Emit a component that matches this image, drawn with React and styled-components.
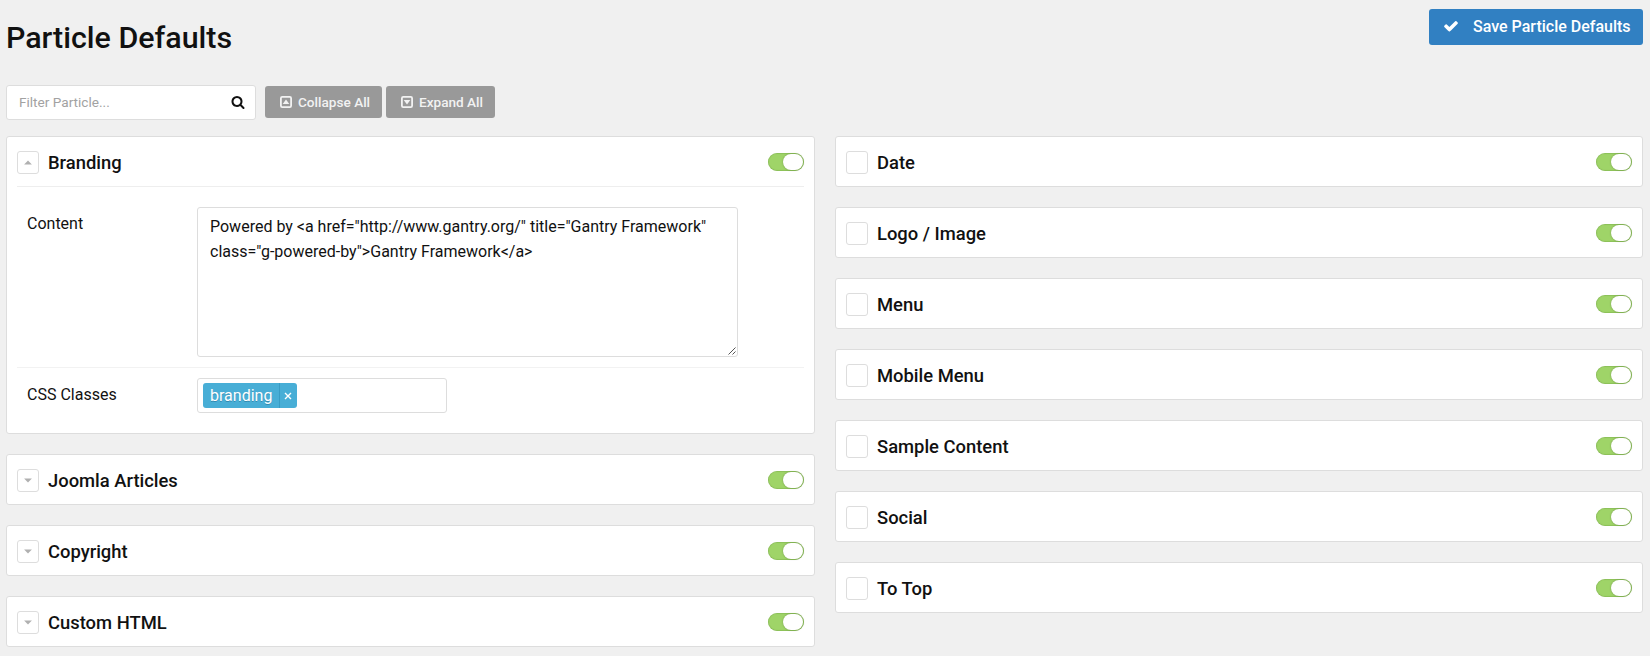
import React, { useState } from 'react';
import styled, { createGlobalStyle } from 'styled-components';

const GlobalStyle = createGlobalStyle`
  *, *::before, *::after { box-sizing: border-box; }
  body {
    margin: 0;
    background: #f0f0f0;
    color: #111;
    font-family: Roboto, "Liberation Sans", sans-serif;
    font-size: 16px;
    line-height: 24px;
    -webkit-font-smoothing: antialiased;
  }
  input, textarea, button { font-family: inherit; }
`;

const Page = styled.main`
  padding: 9px 7px 9px 6px;
  min-height: 656px;
`;

const Header = styled.header`
  display: flex;
  justify-content: space-between;
  align-items: flex-start;
  height: 76px;
`;

const Title = styled.h2`
  margin: 9px 0 0;
  font-size: 30.4px;
  font-weight: 500;
  line-height: 40px;
`;

const SaveButton = styled.button`
  display: flex;
  align-items: center;
  gap: 14px;
  width: 214px;
  height: 36px;
  padding: 0 0 2px 14px;
  border: 0;
  border-radius: 3px;
  background: #3180c2;
  color: #fff;
  font-size: 16px;
  font-weight: 500;
  white-space: nowrap;
`;

const Toolbar = styled.div`
  display: flex;
  align-items: flex-start;
  height: 35px;
  margin-bottom: 16px;
`;

const SearchBox = styled.label`
  display: flex;
  align-items: center;
  width: 250px;
  height: 35px;
  margin-right: 9px;
  padding: 0 10px 2px 12px;
  border: 1px solid #ddd;
  border-radius: 3px;
  background: #fff;

  input {
    flex: 1;
    min-width: 0;
    padding: 0;
    border: 0;
    outline: 0;
    background: none;
    font-size: 13.6px;
    &::placeholder { color: #a2a2a2; opacity: 1; }
  }
`;

const ToolButton = styled.button`
  display: flex;
  align-items: center;
  gap: 6px;
  width: ${(p) => p.$width}px;
  height: 32px;
  margin: 1px 4px 0 0;
  padding: 0 0 0 14px;
  border: 0;
  border-radius: 3px;
  background: #999;
  color: #f2f2f2;
  font-size: 13.6px;
  font-weight: 500;
  white-space: nowrap;
`;

const Columns = styled.div`
  display: grid;
  grid-template-columns: 809px 808px;
  column-gap: 20px;
  align-items: start;
`;

const Column = styled.div`
  display: flex;
  flex-direction: column;
  gap: 20px;
`;

const Card = styled.section`
  padding: 0 10px;
  border: 1px solid #ddd;
  border-radius: 3px;
  background: #fff;
`;

const CardHeader = styled.div`
  display: flex;
  align-items: center;
  height: ${(p) => (p.$open ? 50 : 49)}px;
  border-bottom: ${(p) => (p.$open ? '1px solid #eee' : '0')};
`;

const CollapseButton = styled.button`
  display: flex;
  align-items: center;
  justify-content: center;
  width: 22px;
  height: 23px;
  margin: 2px 9px 0 0;
  padding: 0;
  border: 1px solid #ddd;
  border-radius: 3px;
  background: #fff;
`;

const CardTitle = styled.h4`
  flex: 1;
  margin: 3px 0 0;
  font-size: 18.4px;
  font-weight: 500;
  line-height: 24px;
`;

const Switch = styled.button`
  display: flex;
  justify-content: ${(p) => (p.$on ? 'flex-end' : 'flex-start')};
  width: 36px;
  height: 18px;
  margin-top: 1px;
  padding: 1px;
  border: 0;
  border-radius: 9px;
  background: ${(p) => (p.$on ? '#9fd468' : '#ccc')};
  box-shadow: inset 0 0 1px 0.5px rgba(60, 110, 20, 0.35);

  span {
    width: 20px;
    height: 16px;
    border-radius: 8px;
    background: #fff;
    box-shadow: 0 0 2px rgba(0, 0, 0, 0.3);
  }
`;

const Field = styled.div`
  display: flex;
  align-items: flex-start;
  padding: ${(p) => p.$pad};
  border-bottom: ${(p) => (p.$line ? '1px solid #f2f2f2' : '0')};
`;

const FieldLabel = styled.span`
  width: 170px;
  padding-top: 5px;
`;

const AreaWrap = styled.div`
  position: relative;
  width: 541px;
  height: 150px;

  textarea {
    display: block;
    width: 100%;
    height: 100%;
    padding: 6px 12px;
    border: 1px solid #ddd;
    border-radius: 3px;
    outline: 0;
    resize: none;
    overflow: hidden;
    color: #111;
    font-size: 16px;
    line-height: 25px;
  }

  svg {
    position: absolute;
    right: 2px;
    bottom: 2px;
  }
`;

const TagInput = styled.div`
  display: flex;
  align-items: center;
  width: 250px;
  height: 35px;
  padding: 0 5px;
  border: 1px solid #ddd;
  border-radius: 3px;
`;

const Tag = styled.span`
  display: flex;
  width: 94px;
  height: 25px;
  border-radius: 3px;
  background: #48aed6;
  color: #fff;
  line-height: 25px;
  text-shadow: 0 1px 0 rgba(0, 51, 83, 0.3);

  b {
    width: 76px;
    padding-left: 7px;
    font-weight: 400;
  }
  i {
    display: flex;
    flex: 1;
    align-items: center;
    justify-content: center;
    padding-right: 1px;
    border-left: 1px solid #389cc4;
  }
`;

const CheckIcon = () => (
  <svg width="16" height="16" viewBox="0 0 1792 1792" fill="currentColor">
    <path d="M1671 566q0 40-28 68l-724 724-136 136q-28 28-68 28t-68-28l-136-136-362-362q-28-28-28-68t28-68l136-136q28-28 68-28t68 28l294 295 656-657q28-28 68-28t68 28l136 136q28 28 28 68z" />
  </svg>
);

const SearchIcon = () => (
  <svg width="14" height="14" viewBox="0 0 1792 1792" fill="#111">
    <path d="M1216 832q0-185-131.5-316.5t-316.5-131.5-316.5 131.5-131.5 316.5 131.5 316.5 316.5 131.5 316.5-131.5 131.5-316.5zm512 832q0 52-38 90t-90 38q-54 0-90-38l-343-342q-179 124-399 124-143 0-273.5-55.5t-225-150-150-225-55.5-273.5 55.5-273.5 150-225 225-150 273.5-55.5 273.5 55.5 225 150 150 225 55.5 273.5q0 220-124 399l343 343q37 37 37 90z" />
  </svg>
);

const BoxCaret = ({ up }) => (
  <svg width="13" height="12" viewBox="0 0 13 12">
    <rect x="1.9" y="0.9" width="10.2" height="10.2" rx="1.3" fill="none" stroke="currentColor" strokeWidth="1.8" />
    <path d={up ? 'M3.7 8h6.6L7 3.6z' : 'M3.7 4h6.6L7 8.4z'} fill="currentColor" />
  </svg>
);

const Caret = ({ up }) => (
  <svg width="8" height="5" viewBox="0 0 8 5">
    <path d={up ? 'M0.1 4.6h7.8L4 0.4z' : 'M0.1 0.4h7.8L4 4.6z'} fill="#b0b0b0" />
  </svg>
);

function Toggle() {
  const [on, setOn] = useState(true);
  return (
    <Switch type="button" $on={on} onClick={() => setOn(!on)}>
      <span />
    </Switch>
  );
}

function Particle({ name, caret, children }) {
  return (
    <Card>
      <CardHeader $open={Boolean(children)}>
        <CollapseButton type="button">{caret && <Caret up={caret === 'up'} />}</CollapseButton>
        <CardTitle>{name}</CardTitle>
        <Toggle />
      </CardHeader>
      {children}
    </Card>
  );
}

const LEFT = ['Joomla Articles', 'Copyright', 'Custom HTML'];
const RIGHT = ['Date', 'Logo / Image', 'Menu', 'Mobile Menu', 'Sample Content', 'Social', 'To Top'];
const CONTENT =
  'Powered by <a href="http://www.gantry.org/" title="Gantry Framework" class="g-powered-by">Gantry Framework</a>';

export default function App() {
  return (
    <Page>
      <GlobalStyle />
      <Header>
        <Title>Particle Defaults</Title>
        <SaveButton type="button">
          <CheckIcon />
          Save Particle Defaults
        </SaveButton>
      </Header>
      <Toolbar>
        <SearchBox>
          <input placeholder="Filter Particle..." />
          <SearchIcon />
        </SearchBox>
        <ToolButton type="button" $width={117}>
          <BoxCaret up />
          Collapse All
        </ToolButton>
        <ToolButton type="button" $width={109}>
          <BoxCaret />
          Expand All
        </ToolButton>
      </Toolbar>
      <Columns>
        <Column>
          <Particle name="Branding" caret="up">
            <Field $pad="20px 0 10px 10px" $line>
              <FieldLabel>Content</FieldLabel>
              <AreaWrap>
                <textarea defaultValue={CONTENT} spellCheck={false} />
                <svg width="8" height="8" viewBox="0 0 8 8" stroke="#555" strokeWidth="1">
                  <path d="M0.5 7.5L7.5 0.5M4.5 7.5L7.5 4.5" />
                </svg>
              </AreaWrap>
            </Field>
            <Field $pad="10px 0 20px 10px">
              <FieldLabel>CSS Classes</FieldLabel>
              <TagInput>
                <Tag>
                  <b>branding</b>
                  <i>
                    <svg width="8" height="8" viewBox="0 0 8 8" stroke="#fff" strokeWidth="1.4">
                      <path d="M1 1l6 6M7 1L1 7" />
                    </svg>
                  </i>
                </Tag>
              </TagInput>
            </Field>
          </Particle>
          {LEFT.map((name) => (
            <Particle key={name} name={name} caret="down" />
          ))}
        </Column>
        <Column>
          {RIGHT.map((name) => (
            <Particle key={name} name={name} />
          ))}
        </Column>
      </Columns>
    </Page>
  );
}
